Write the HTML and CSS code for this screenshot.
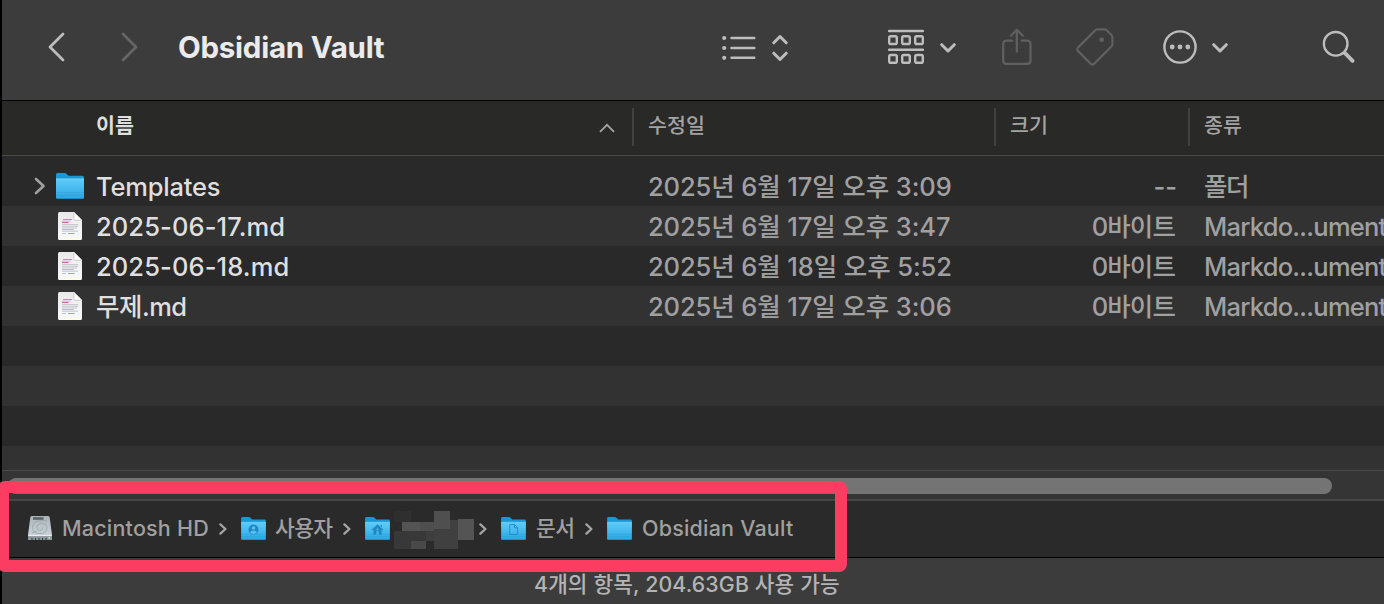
FILE: index.html
```html
<!DOCTYPE html>
<html lang="ko">
<head>
    <meta charset="UTF-8">
    <meta name="viewport" content="width=device-width, initial-scale=1.0">
    <title>Obsidian Vault</title>
    <link rel="stylesheet" href="styles.css">
</head>
<body>
    <!-- Shared icons -->
    <svg class="sprite" width="0" height="0">
        <defs>
            <linearGradient id="folderFront" x1="0" y1="0" x2="0" y2="1">
                <stop offset="0" stop-color="#5fcbf8"/>
                <stop offset="0.7" stop-color="#3bb3ec"/>
                <stop offset="1" stop-color="#2ba3df"/>
            </linearGradient>
            <linearGradient id="driveTop" x1="0" y1="0" x2="0" y2="1">
                <stop offset="0" stop-color="#aab3b8"/>
                <stop offset="1" stop-color="#d3dbdf"/>
            </linearGradient>
            <linearGradient id="page" x1="0" y1="0" x2="0" y2="1">
                <stop offset="0" stop-color="#e9e9e9"/>
                <stop offset="1" stop-color="#fafafa"/>
            </linearGradient>
        </defs>
        <symbol id="folder" viewBox="0 0 28 26">
            <path d="M0 1.5Q0 0 1.5 0H8.5Q9.6 0 10.5 .9L12 2.2Q12.6 2.8 13.6 2.8H26.5Q28 2.8 28 4.3V12H0Z" fill="#1c97d3"/>
            <path d="M0 5.8H28V24.3Q28 26 26.3 26H1.7Q0 26 0 24.3Z" fill="url(#folderFront)"/>
            <path d="M0 6H28" stroke="#7bd8fb" stroke-width=".7"/>
            <path d="M0 19.5H28M0 22H28" stroke="#2593cc" stroke-width=".5" opacity=".6"/>
            <path d="M.5 25.6H27.5" stroke="#1b86bd" stroke-width=".8"/>
        </symbol>
        <symbol id="file" viewBox="0 0 24 28">
            <path d="M1.5 0H16L24 8V26.5Q24 28 22.5 28H1.5Q0 28 0 26.5V1.5Q0 0 1.5 0Z" fill="url(#page)"/>
            <path d="M15.8 0L24 8.2H17.3Q15.8 8.2 15.8 6.7Z" fill="#fff"/>
            <path d="M15.8 1V6.7Q15.8 8.2 17.3 8.2H23" fill="none" stroke="#b9b9b9" stroke-width=".7"/>
            <path d="M5 7.5H14" stroke="#74b3af" stroke-width="1"/>
            <path d="M4 9H13" stroke="#b4b8d2" stroke-width=".8"/>
            <path d="M4 10.5H10.5" stroke="#e75aa4" stroke-width="1.2"/>
            <path d="M4 12.6H20M4 14.3H20M4 16H19M4 19.2H20" stroke="#bcc1c6" stroke-width=".9"/>
            <path d="M4 17.6H16" stroke="#b9b7de" stroke-width="1"/>
            <path d="M4 21.5H8" stroke="#aacdc8" stroke-width=".9"/>
            <path d="M10 21.5H16.5" stroke="#8d95e0" stroke-width=".9"/>
        </symbol>
        <symbol id="next" viewBox="0 0 8 12">
            <path d="M1.4 1.4L6.4 6L1.4 10.6" fill="none" stroke="#a5a5a5" stroke-width="2.3" stroke-linecap="round" stroke-linejoin="round"/>
        </symbol>
        <symbol id="down" viewBox="0 0 16 10">
            <path d="M1.7 1.7L8 8L14.3 1.7" fill="none" stroke="#bdbdbd" stroke-width="3" stroke-linecap="round" stroke-linejoin="round"/>
        </symbol>
    </svg>

    <div class="window">
        <header class="toolbar">
            <svg class="back" width="18" height="30" viewBox="0 0 18 30"><path d="M16 2L3 15L16 28" /></svg>
            <svg class="forward" width="18" height="30" viewBox="0 0 18 30"><path d="M2 2L15 15L2 28" /></svg>
            <h1>Obsidian Vault</h1>
            <svg class="view-list" width="34" height="26" viewBox="0 0 34 26">
                <path d="M9.5 3H32.3M9.5 13H32.3M9.5 22.8H32.3" />
                <g class="dots"><circle cx="2.2" cy="3" r="2.1"/><circle cx="2.2" cy="13" r="2.1"/><circle cx="2.2" cy="22.8" r="2.1"/></g>
            </svg>
            <svg class="updown" width="16" height="28" viewBox="0 0 16 28"><path d="M1.8 8.8L8 2.5L14.2 8.8M1.8 19.2L8 25.5L14.2 19.2"/></svg>
            <svg class="group" width="36" height="36" viewBox="0 0 36 36">
                <path d="M1 2H35M1 20.7H35"/>
                <rect x="1.2" y="7.2" width="7.6" height="7.8" rx="1.6"/>
                <rect x="14.2" y="7.2" width="7.6" height="7.8" rx="1.6"/>
                <rect x="27.2" y="7.2" width="7.6" height="7.8" rx="1.6"/>
                <rect x="1.2" y="26" width="7.6" height="7.8" rx="1.6"/>
                <rect x="14.2" y="26" width="7.6" height="7.8" rx="1.6"/>
                <rect x="27.2" y="26" width="7.6" height="7.8" rx="1.6"/>
            </svg>
            <svg class="down" width="16" height="10"><use href="#down"/></svg>
            <svg class="share" width="30" height="38" viewBox="0 0 30 38">
                <path d="M10.3 12.6H4.6Q1.2 12.6 1.2 16V32.4Q1.2 35.8 4.6 35.8H25Q28.5 35.8 28.5 32.4V16Q28.5 12.6 25 12.6H19.7M14.8 23.5V2M8.8 7.7L14.8 1.8L20.8 7.7"/>
            </svg>
            <svg class="tag" width="38" height="38" viewBox="0 0 38 38">
                <path d="M19.3 2.2Q20.2 1.4 21.4 1.4H28.6Q29.8 1.4 30.7 2.2L35.6 7.2Q36.4 8 36.4 9.2V16.2Q36.4 17.4 35.6 18.3L18.3 35.6Q16.4 37.3 14.6 35.6L1.9 22.9Q.5 21.3 1.9 19.6Z"/>
                <circle cx="25.7" cy="11.8" r="2.4"/>
            </svg>
            <svg class="more" width="34" height="34" viewBox="0 0 34 34">
                <circle cx="17" cy="17" r="15.6"/>
                <g class="dots"><circle cx="9.2" cy="17" r="2.4"/><circle cx="17" cy="17" r="2.4"/><circle cx="24.8" cy="17" r="2.4"/></g>
            </svg>
            <svg class="down down-more" width="16" height="10"><use href="#down"/></svg>
            <svg class="search" width="34" height="34" viewBox="0 0 34 34">
                <circle cx="13.7" cy="13.8" r="11.8"/>
                <path d="M23 23.2L30.6 30.8"/>
            </svg>
        </header>

        <div class="columns grid">
            <div class="col-name">이름
                <svg width="16" height="10" viewBox="0 0 16 10"><path d="M1 8.8L8 1.8L15 8.8"/></svg>
            </div>
            <div>수정일</div>
            <div>크기</div>
            <div>종류</div>
        </div>

        <main class="files">
            <div class="row grid">
                <div class="name">
                    <svg class="expand" width="12" height="18" viewBox="0 0 12 18"><path d="M2 2L9.5 9L2 16"/></svg>
                    <svg class="folder" width="28" height="26"><use href="#folder"/></svg>
                    <span class="plain">Templates</span>
                </div>
                <div class="date">2025년 6월 17일 오후 3:09</div>
                <div class="size dashes">--</div>
                <div class="kind folder-kind">폴더</div>
            </div>
            <div class="row grid">
                <div class="name"><svg class="file" width="24" height="28"><use href="#file"/></svg><span>2025-06-17.md</span></div>
                <div class="date">2025년 6월 17일 오후 3:47</div>
                <div class="size">0바이트</div>
                <div class="kind">Markdo...ument</div>
            </div>
            <div class="row grid">
                <div class="name"><svg class="file" width="24" height="28"><use href="#file"/></svg><span>2025-06-18.md</span></div>
                <div class="date">2025년 6월 18일 오후 5:52</div>
                <div class="size">0바이트</div>
                <div class="kind">Markdo...ument</div>
            </div>
            <div class="row grid">
                <div class="name"><svg class="file" width="24" height="28"><use href="#file"/></svg><span class="untitled">무제.md</span></div>
                <div class="date">2025년 6월 17일 오후 3:06</div>
                <div class="size">0바이트</div>
                <div class="kind">Markdo...ument</div>
            </div>
            <div class="row"></div>
            <div class="row"></div>
            <div class="row"></div>
            <div class="row"></div>
        </main>

        <div class="scrollbar"><div class="thumb"></div></div>

        <nav class="path">
            <svg class="drive" width="24" height="25" viewBox="0 0 24 25">
                <path d="M4 0H20Q21.4 0 21.7 1.4L24 19V22.5Q24 24 22.5 24H1.5Q0 24 0 22.5V19L2.3 1.4Q2.6 0 4 0Z" fill="url(#driveTop)"/>
                <path d="M0 20H24V22.5Q24 24 22.5 24H1.5Q0 24 0 22.5Z" fill="#8b969b"/>
                <path d="M.6 19.6H23.4" stroke="#edf2f4" stroke-width="1"/>
                <path d="M5 1.2H15.5V3.8H5Z" fill="#59636a"/>
                <path d="M19 5Q19.5 4.4 13 4.6Q4.5 5.3 4.5 11.4Q4.7 17.7 12 17.7Q18.8 17.5 19 11.5Q18.8 8 14.5 7.5Q9.5 7.3 9 11.4Q9 14.5 12 14.6Q15 14.2 14.6 11.6M4 17L9 15" fill="none" stroke="#98a4aa" stroke-width=".8"/>
                <path d="M4 22V24M7.5 22V24M11 22V24M14.5 22V24M18 22V24" stroke="#384046" stroke-width="1.1"/>
                <circle cx="21.2" cy="21.9" r=".8" fill="#d7f0df"/>
            </svg>
            <span class="p-mac">Macintosh HD</span>
            <svg class="next" width="8" height="12"><use href="#next"/></svg>
            <svg class="p-folder" width="25" height="23" viewBox="0 0 28 26">
                <use href="#folder" width="28" height="26"/>
                <circle cx="14" cy="14.2" r="5.7" fill="#2288c4"/>
                <circle cx="14" cy="12.4" r="2" fill="#55bff0"/>
                <path d="M10.2 17.4Q10.8 15.3 14 15.3Q17.2 15.3 17.8 17.4Q16.2 19.1 14 19.1Q11.8 19.1 10.2 17.4Z" fill="#55bff0"/>
            </svg>
            <span class="p-users">사용자</span>
            <svg class="next" width="8" height="12"><use href="#next"/></svg>
            <svg class="p-folder" width="25" height="23" viewBox="0 0 28 26">
                <use href="#folder" width="28" height="26"/>
                <path d="M14 8.2L20.7 14.3L19.8 15.2L18.6 14.2V20H15.5V16H12.5V20H9.4V14.2L8.2 15.2L7.3 14.3ZM17.5 9H19V11.5L17.5 10.2Z" fill="#2288c4"/>
                <circle cx="14" cy="14" r="1.1" fill="#55bff0"/>
            </svg>
            <svg class="mosaic" width="80" height="38" viewBox="0 0 80 38" shape-rendering="crispEdges">
                <rect x="0" y="0" width="17" height="11" fill="#2f2f2f"/>
                <rect x="0" y="20" width="17" height="18" fill="#383838"/>
                <rect x="17" y="20" width="15" height="10" fill="#383838"/>
                <rect x="17" y="30" width="15" height="8" fill="#494949"/>
                <rect x="8" y="11" width="18" height="9" fill="#545454"/>
                <rect x="26" y="11" width="14" height="9" fill="#4e4e4e"/>
                <rect x="32" y="20" width="8" height="10" fill="#3e3e3e"/>
                <rect x="40" y="9" width="24" height="29" fill="#404040"/>
                <rect x="40" y="0" width="16" height="18" fill="#4f4f4f"/>
                <rect x="56" y="0" width="8" height="9" fill="#2b2b2b"/>
                <rect x="64" y="8" width="16" height="21" fill="#545454"/>
            </svg>
            <svg class="next next-tight" width="8" height="12"><use href="#next"/></svg>
            <svg class="p-folder" width="25" height="23" viewBox="0 0 28 26">
                <use href="#folder" width="28" height="26"/>
                <path d="M9.8 8.5H15.2L18.6 12V19.8H9.8ZM15 8.5V12.2H18.6" fill="none" stroke="#2288c4" stroke-width="1"/>
            </svg>
            <span class="p-docs">문서</span>
            <svg class="next" width="8" height="12"><use href="#next"/></svg>
            <svg class="p-folder" width="25" height="23"><use href="#folder"/></svg>
            <span class="p-vault">Obsidian Vault</span>
        </nav>

        <footer class="status">4개의 항목, 204.63GB 사용 가능</footer>
    </div>

    <div class="highlight"></div>
</body>
</html>
```
FILE: styles.css
```css
* {
    box-sizing: border-box;
}

body {
    margin: 0;
    background: #000;
    font-family: Inter, "Noto Sans CJK KR", sans-serif;
    overflow: hidden;
    position: relative;
    width: 1384px;
    height: 604px;
}

svg {
    display: block;
    flex: none;
}

.sprite {
    position: absolute;
}

.window {
    display: flex;
    flex-direction: column;
    height: 604px;
    margin-left: 2px;
    overflow: hidden;
    white-space: nowrap;
    background: #292929;
}

/* Toolbar */
.toolbar {
    display: flex;
    align-items: center;
    height: 101px;
    flex: none;
    padding: 0 0 6px 45px;
    background: #3c3c3c;
    border-bottom: 1px solid #000;
}

.toolbar svg {
    fill: none;
    stroke: #bdbdbd;
    stroke-width: 2.4;
    stroke-linecap: round;
    stroke-linejoin: round;
}

.toolbar .dots {
    fill: #bdbdbd;
    stroke: none;
}

.toolbar .back {
    stroke-width: 2.8;
}

.toolbar .forward {
    margin-left: 56px;
    stroke: #656565;
    stroke-width: 2.8;
}

h1 {
    width: 543px;
    margin: 0 0 0 40px;
    font-size: 29.5px;
    font-weight: 700;
    line-height: 40px;
    letter-spacing: -0.25px;
    text-indent: -1px;
    color: #ebebeb;
}

.toolbar .view-list {
    margin-top: 1px;
}

.toolbar .updown {
    margin: 1px 0 0 16px;
    stroke-width: 3;
}

.toolbar .group {
    margin-left: 100px;
}

.toolbar .down {
    margin: 2px 0 0 16px;
}

.toolbar .down-more {
    margin-left: 15px;
}

.toolbar .share {
    margin-left: 46px;
    stroke: #606060;
    stroke-width: 2.2;
}

.toolbar .tag {
    margin-left: 44px;
    stroke: #606060;
    stroke-width: 2.2;
}

.toolbar .tag circle {
    fill: #606060;
    stroke: none;
}

.toolbar .more {
    margin-left: 49px;
}

.toolbar .search {
    margin-left: 94px;
}

.toolbar .search path {
    stroke-width: 3.8;
}

/* List */
.grid {
    display: grid;
    grid-template-columns: 630px 362px 194px 1fr;
}

.columns {
    flex: none;
    height: 55px;
    padding-top: 7px;
    background: #292927;
    border-bottom: 1px solid #4a4a4a;
    font-size: 20.6px;
    line-height: 36px;
    font-weight: 500;
    color: #a3a3a3;
}

.columns div {
    height: 38px;
    padding-left: 14px;
    border-left: 2px solid #414141;
}

.columns .col-name {
    display: flex;
    justify-content: space-between;
    padding: 0 17px 0 92px;
    border-color: transparent;
    font-weight: 700;
    color: #dedede;
}

.col-name svg {
    margin-top: 15px;
    fill: none;
    stroke: #a3a3a3;
    stroke-width: 1.8;
}

.files {
    height: 314px;
    padding-top: 10px;
    flex: none;
    overflow: hidden;
}

.row {
    height: 40px;
    font-size: 25.5px;
    font-weight: 500;
    line-height: 41px;
    color: #a0a0a0;
    overflow: hidden;
}

.row:nth-child(even) {
    background: #323232;
}

.name {
    display: flex;
    align-items: center;
    height: 40px;
    letter-spacing: 0.1px;
    color: #dfdfdf;
}

.name .plain {
    letter-spacing: -0.2px;
}

.name .untitled {
    letter-spacing: -0.5px;
}

.expand {
    margin: -1px 9px 0 32px;
    fill: none;
    stroke: #a0a0a0;
    stroke-width: 2.6;
    stroke-linecap: round;
    stroke-linejoin: round;
}

.folder {
    margin: 0 12px 0 1px;
}

.file {
    margin: 0 14px 0 56px;
}

.date,
.kind {
    padding-left: 16px;
}

.date {
    letter-spacing: -0.1px;
}

.kind {
    letter-spacing: -0.75px;
}

.folder-kind {
    letter-spacing: -1.5px;
}

.size {
    padding-right: 13px;
    text-align: right;
    letter-spacing: -0.9px;
}

.dashes {
    padding-right: 11px;
    letter-spacing: 0;
}

/* Horizontal scrollbar */
.scrollbar {
    height: 31px;
    flex: none;
    padding: 7px 52px 0 6px;
    background: #353535;
    border-top: 1px solid #4a4a4a;
    border-bottom: 2px solid #474747;
}

.thumb {
    height: 16px;
    border-radius: 8px;
    background: #747474;
}

/* Path bar */
.path {
    display: flex;
    align-items: center;
    height: 57px;
    flex: none;
    padding: 0 0 2px 26px;
    border-bottom: 1px solid #000;
    background: #2a2a2a;
    font-size: 21.5px;
    font-weight: 500;
    line-height: 40px;
    color: #a0a0a0;
}

.path span {
    margin-left: 10px;
    flex: none;
}

.path .p-mac {
    width: 147px;
    letter-spacing: 0.2px;
}

.path .p-users {
    width: 58px;
    margin-left: 9px;
    letter-spacing: -0.6px;
}

.p-docs {
    width: 39px;
    letter-spacing: -0.6px;
}

.p-vault {
    letter-spacing: 0.2px;
}

.p-folder {
    margin-top: 1px;
}

.next {
    margin: 1px 14px 0 10px;
}

.next-tight {
    margin-left: 5px;
}

.mosaic {
    margin: 3px 0 0 4px;
}

.status {
    height: 46px;
    padding: 6px 0 0 532px;
    background: #3c3c3c;
    font-size: 21.3px;
    font-weight: 500;
    line-height: 40px;
    letter-spacing: 0.15px;
    color: #b4b4b4;
}

/* Frame drawn over the path bar */
.highlight {
    position: absolute;
    left: -3px;
    top: 481px;
    width: 850px;
    height: 91px;
    border: 12px solid #fc3d62;
    border-radius: 8px;
}
```
